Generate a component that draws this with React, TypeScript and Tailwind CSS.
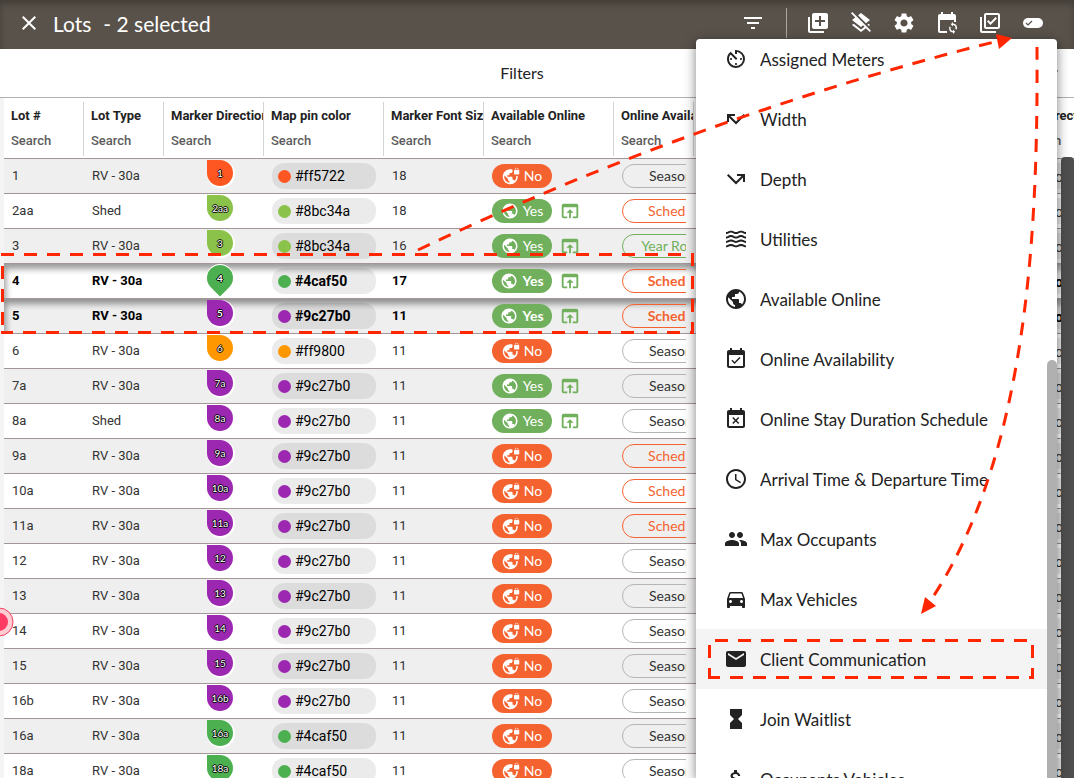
import type { ReactNode } from "react";
import type { IconType } from "react-icons";
import {
  MdAccessTime,
  MdAttachMoney,
  MdAvTimer,
  MdCallMissed,
  MdCallMissedOutgoing,
  MdClose,
  MdDirectionsCar,
  MdEmail,
  MdEventAvailable,
  MdEventBusy,
  MdExpandMore,
  MdFilterList,
  MdHourglassFull,
  MdLayersClear,
  MdLibraryAdd,
  MdOpenInBrowser,
  MdOutlineLibraryAddCheck,
  MdPeople,
  MdPublic,
  MdSettings,
  MdVpnLock,
  MdWaves,
} from "react-icons/md";

type Lot = {
  id: string;
  type: string;
  color: string;
  fontSize: number;
  online: boolean;
  availability: "Seasonal" | "Schedule" | "Year Round";
  selected?: boolean;
};

const lots: Lot[] = [
  { id: "1", type: "RV - 30a", color: "#ff5722", fontSize: 18, online: false, availability: "Seasonal" },
  { id: "2aa", type: "Shed", color: "#8bc34a", fontSize: 18, online: true, availability: "Schedule" },
  { id: "3", type: "RV - 30a", color: "#8bc34a", fontSize: 16, online: true, availability: "Year Round" },
  { id: "4", type: "RV - 30a", color: "#4caf50", fontSize: 17, online: true, availability: "Schedule", selected: true },
  { id: "5", type: "RV - 30a", color: "#9c27b0", fontSize: 11, online: true, availability: "Schedule", selected: true },
  { id: "6", type: "RV - 30a", color: "#ff9800", fontSize: 11, online: false, availability: "Seasonal" },
  { id: "7a", type: "RV - 30a", color: "#9c27b0", fontSize: 11, online: true, availability: "Seasonal" },
  { id: "8a", type: "Shed", color: "#9c27b0", fontSize: 11, online: true, availability: "Seasonal" },
  { id: "9a", type: "RV - 30a", color: "#9c27b0", fontSize: 11, online: false, availability: "Schedule" },
  { id: "10a", type: "RV - 30a", color: "#9c27b0", fontSize: 11, online: false, availability: "Schedule" },
  { id: "11a", type: "RV - 30a", color: "#9c27b0", fontSize: 11, online: false, availability: "Schedule" },
  { id: "12", type: "RV - 30a", color: "#9c27b0", fontSize: 11, online: false, availability: "Seasonal" },
  { id: "13", type: "RV - 30a", color: "#9c27b0", fontSize: 11, online: false, availability: "Seasonal" },
  { id: "14", type: "RV - 30a", color: "#9c27b0", fontSize: 11, online: false, availability: "Seasonal" },
  { id: "15", type: "RV - 30a", color: "#9c27b0", fontSize: 11, online: false, availability: "Seasonal" },
  { id: "16b", type: "RV - 30a", color: "#9c27b0", fontSize: 11, online: false, availability: "Seasonal" },
  { id: "16a", type: "RV - 30a", color: "#4caf50", fontSize: 11, online: false, availability: "Seasonal" },
  { id: "18a", type: "RV - 30a", color: "#4caf50", fontSize: 11, online: false, availability: "Seasonal" },
];

const columns = [
  { label: "Lot #", width: "w-[80px]" },
  { label: "Lot Type", width: "w-[80px]" },
  { label: "Marker Direction", width: "w-[100px]" },
  { label: "Map pin color", width: "w-[120px]" },
  { label: "Marker Font Size", width: "w-[100px]" },
  { label: "Available Online", width: "w-[130px]" },
  { label: "Online Availability", width: "w-[80px]" },
];

const availabilityColors = {
  Seasonal: "border-[#b5b5b5] text-[#333333]",
  Schedule: "border-[#f4632f] text-[#f4632f]",
  "Year Round": "border-[#70b05c] text-[#70b05c]",
};

const menuItems: { label: string; icon: IconType }[] = [
  { label: "Assigned Meters", icon: MdAvTimer },
  { label: "Width", icon: MdCallMissed },
  { label: "Depth", icon: MdCallMissedOutgoing },
  { label: "Utilities", icon: MdWaves },
  { label: "Available Online", icon: MdPublic },
  { label: "Online Availability", icon: MdEventAvailable },
  { label: "Online Stay Duration Schedule", icon: MdEventBusy },
  { label: "Arrival Time & Departure Time", icon: MdAccessTime },
  { label: "Max Occupants", icon: MdPeople },
  { label: "Max Vehicles", icon: MdDirectionsCar },
  { label: "Client Communication", icon: MdEmail },
  { label: "Join Waitlist", icon: MdHourglassFull },
  { label: "Occupants Vehicles", icon: MdAttachMoney },
];

const CalendarSyncIcon = () => (
  <svg viewBox="0 0 24 24" className="size-6" fill="currentColor" aria-hidden="true">
    <path d="M19 11V9H5v11h7v2H5a2 2 0 0 1-2-2V5c0-1.100.9-2 2-2h1V1h2v2h8V1h2v2h1a2 2 0 0 1 2 2v6z" />
    <path d="M18 11v1.500a4 4 0 0 1 3.300 6.200l-1.100-1.100A2.500 2.500 0 0 0 18 14v1.500L15.800 13.300z" />
    <path d="M18 23v-1.500a4 4 0 0 1-3.300-6.200l1.100 1.100A2.500 2.500 0 0 0 18 20v-1.500l2.200 2.200z" />
  </svg>
);

const TogglePillIcon = () => (
  <svg viewBox="0 0 24 24" className="size-6" aria-hidden="true">
    <rect x="2" y="7" width="20" height="10" rx="5" fill="currentColor" />
    <path d="M5 12l2 2 4-4" fill="none" stroke="#59524b" strokeWidth="1.200" />
  </svg>
);

const ToolbarButton = ({ label, children }: { label: string; children: ReactNode }) => (
  <button type="button" aria-label={label} className="flex h-10 w-[43px] items-center justify-center">
    {children}
  </button>
);

const LotMarker = ({ lot }: { lot: Lot }) => (
  <div className="relative flex size-[26px] items-center justify-center">
    <span
      className={`absolute inset-0 rounded-full rounded-tl-none ${
        lot.id === "4" ? "rotate-[225deg] shadow-[0_0_0_1px_#ffffff]" : "shadow-[1px_1px_0_1px_#ffffff]"
      }`}
      style={{ backgroundColor: lot.color }}
    />
    <span className="relative font-[Lato,sans-serif] text-[10px] leading-none text-white [text-shadow:1px_0_0_#000,-1px_0_0_#000,0_1px_0_#000,0_-1px_0_#000]">
      {lot.id}
    </span>
  </div>
);

const LotRow = ({ lot }: { lot: Lot }) => (
  <tr
    className={`h-[35px] odd:bg-[#efefef] even:bg-white ${
      lot.selected ? "font-bold text-black shadow-[inset_2px_5px_6px_rgba(0,0,0,0.4)]" : "text-[#333333]"
    }`}
  >
    <td className="border-b border-[#a39698] pl-2">{lot.id}</td>
    <td className="border-b border-[#a39698] pl-2">{lot.type}</td>
    <td className="border-b border-[#a39698] pb-[6px] pl-[43px]">
      <LotMarker lot={lot} />
    </td>
    <td className="border-b border-[#a39698] px-2">
      <div className="flex h-[26px] items-center gap-1 rounded-xl bg-black/8 pl-[6px] text-sm text-black">
        <span className="size-[13px] rounded-full" style={{ backgroundColor: lot.color }} />
        {lot.color}
      </div>
    </td>
    <td className="border-b border-[#a39698] pl-2">{lot.fontSize}</td>
    <td className="border-b border-[#a39698] pl-2 font-[Lato,sans-serif] text-sm">
      <div className="flex items-center gap-[7px]">
        <span
          className={`flex h-6 w-[60px] items-center justify-center gap-1 rounded-full text-white ${
            lot.online ? "bg-[#70b05c]" : "bg-[#f4632f]"
          }`}
        >
          {lot.online ? <MdPublic className="size-[18px]" /> : <MdVpnLock className="size-[18px]" />}
          {lot.online ? "Yes" : "No"}
        </span>
        {lot.online && <MdOpenInBrowser className="size-[22px] text-[#70b05c]" />}
      </div>
    </td>
    <td className="border-b border-[#a39698] px-2 font-[Lato,sans-serif] text-sm">
      <div className="overflow-hidden">
        <span
          className={`flex h-6 w-[108px] items-center justify-center rounded-full border ${availabilityColors[lot.availability]}`}
        >
          {lot.availability}
        </span>
      </div>
    </td>
    <td className="border-b border-[#a39698]" />
    <td className="border-b border-[#a39698]">
      <div className="h-[26px] bg-black/8 pt-1 pl-[41px] text-sm leading-5">o</div>
    </td>
  </tr>
);

const HeaderCell = ({ label, width }: { label: string; width: string }) => (
  <th scope="col" className={`${width} border-b border-[#a39698] pt-1 pb-[2px] text-left align-top`}>
    <label className="flex h-[54px] flex-col gap-[7px] overflow-hidden border-r border-[#d5d5d5] pt-[5px] pl-[7px] leading-[18px] whitespace-nowrap text-[#222222]">
      {label}
      <input
        placeholder="Search"
        className="w-full font-medium outline-none placeholder:text-[#5c5c5c] placeholder:opacity-100"
      />
    </label>
  </th>
);

const ActionsMenu = () => (
  <div className="absolute top-[39px] right-[17px] bottom-0 z-10 flex w-[361px] overflow-hidden rounded-t bg-white shadow-[0_3px_12px_rgba(0,0,0,0.5)]">
    <div role="menu" className="-mt-[10px] flex-1">
      {menuItems.map(({ label, icon: Icon }) => (
        <button
          key={label}
          type="button"
          role="menuitem"
          className={`flex h-[60px] w-full items-center gap-3 pl-7 text-left text-[17px] text-[#222222] ${
            label === "Client Communication" ? "bg-[#f4f4f4]" : ""
          }`}
        >
          <Icon className="size-6 shrink-0" />
          <span className="pt-[2px]">{label}</span>
        </button>
      ))}
    </div>
    <div className="mt-[321px] w-[10px] rounded-t-full bg-[#b0b0b0]" />
  </div>
);

const Annotations = () => (
  <svg
    className="pointer-events-none absolute top-0 left-0 z-20 h-[778px] w-[1074px]"
    viewBox="0 0 1074 778"
    fill="none"
    stroke="#ff2600"
    strokeWidth="3"
    strokeDasharray="13 10"
    aria-hidden="true"
  >
    <path d="M1 254.500H692.500V332.500H1" />
    <path d="M2.500 325V256" />
    <path d="M715 640.500H1032.500V677.500H708" />
    <path d="M709.500 645V679" />
    <path d="M418 250Q700 115.600 998 41" />
    <path d="M1037 47C1038 220 1030 451 931 600" />
    <path d="M1012 38L996 34L999 49ZM921 614L925 597L936 606Z" fill="#ff2600" stroke="none" />
    <circle cx="-1" cy="622" r="14" fill="#ffccd3" stroke="#f5415f" strokeWidth="1" strokeDasharray="none" />
    <circle cx="-1" cy="622" r="9" fill="#ff3b63" stroke="none" />
  </svg>
);

const App = () => {
  return (
    <div className="relative flex h-screen flex-col overflow-hidden bg-white font-[Lato,sans-serif] text-[#222222]">
      <header className="flex h-[49px] shrink-0 items-center bg-[#59524b] pr-5 pb-[3px] pl-[17px] text-white shadow-[inset_0_4px_6px_rgba(0,0,0,0.25)]">
        <button type="button" aria-label="Close" className="mr-3">
          <MdClose className="size-6" />
        </button>
        <h1 className="flex gap-3 pt-px text-[21px]">
          <span>Lots</span>
          <span>- 2 selected</span>
        </h1>
        <div className="ml-auto flex items-center">
          <ToolbarButton label="Filter">
            <MdFilterList className="size-6" />
          </ToolbarButton>
          <span className="mr-[9px] ml-3 h-[30px] w-px bg-[#aaa6a2]" />
          <ToolbarButton label="Add lots">
            <MdLibraryAdd className="size-6" />
          </ToolbarButton>
          <ToolbarButton label="Clear layers">
            <MdLayersClear className="size-6" />
          </ToolbarButton>
          <ToolbarButton label="Settings">
            <MdSettings className="size-6" />
          </ToolbarButton>
          <ToolbarButton label="Sync calendar">
            <CalendarSyncIcon />
          </ToolbarButton>
          <ToolbarButton label="Select all">
            <MdOutlineLibraryAddCheck className="size-6" />
          </ToolbarButton>
          <ToolbarButton label="Bulk actions">
            <TogglePillIcon />
          </ToolbarButton>
        </div>
      </header>

      <button type="button" className="flex h-[49px] shrink-0 items-center border-b border-[#b0b0b0] pr-[10px] pl-4">
        <span className="flex-1 pr-3 text-center text-base">Filters</span>
        <MdExpandMore className="size-6" />
      </button>

      <div className="flex min-h-0 flex-1">
        <div className="w-1 shrink-0 bg-[#f4f4f4]" />
        <div className="min-w-0 flex-1 overflow-hidden">
          <table className="w-[1120px] table-fixed border-separate border-spacing-0 font-[Roboto,sans-serif] text-[13px]">
            <thead>
              <tr>
                {columns.map((column) => (
                  <HeaderCell key={column.label} {...column} />
                ))}
                <td className="w-[320px] border-b border-[#a39698]" />
                <HeaderCell label="Lot Direction" width="w-[110px]" />
              </tr>
            </thead>
            <tbody>
              {lots.map((lot) => (
                <LotRow key={lot.id} lot={lot} />
              ))}
            </tbody>
          </table>
        </div>
      </div>

      {/* page scrollbar */}
      <div className="absolute top-[157px] right-0 bottom-0 w-[13px] rounded-t bg-[#4f4f4f]" />

      <ActionsMenu />
      <Annotations />
    </div>
  );
};

export default App;
